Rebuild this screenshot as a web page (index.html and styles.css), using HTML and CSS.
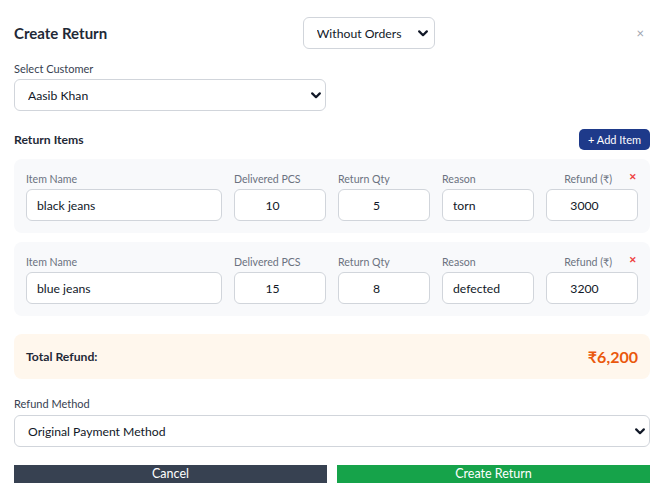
FILE: index.html
```html
<!DOCTYPE html>
<html>
<head>
<meta charset="utf-8">
<link rel="stylesheet" href="styles.css">
</head>
<body>
<div class="modal">
  <div class="header">
    <h1 class="title">Create Return</h1>
    <div class="select-wrap mode">
      <select class="select"><option>Without Orders</option></select>
      <svg class="chev" width="10" height="7" viewBox="0 0 10 7"><path d="M1.2 1.4 L5 5.2 L8.8 1.4" fill="none" stroke="#111827" stroke-width="2.2" stroke-linecap="round" stroke-linejoin="round"/></svg>
    </div>
    <span class="close">×</span>
  </div>

  <label class="label">Select Customer</label>
  <div class="select-wrap customer">
    <select class="select"><option>Aasib Khan</option></select>
    <svg class="chev" width="10" height="7" viewBox="0 0 10 7"><path d="M1.2 1.4 L5 5.2 L8.8 1.4" fill="none" stroke="#111827" stroke-width="2.2" stroke-linecap="round" stroke-linejoin="round"/></svg>
  </div>

  <div class="items-head">
    <span class="section">Return Items</span>
    <button class="add">+ Add Item</button>
  </div>

  <div class="card">
    <div class="field span2"><span class="flabel">Item Name</span><input class="input" value="black jeans"></div>
    <div class="field"><span class="flabel">Delivered PCS</span><input class="input num" value="10"></div>
    <div class="field"><span class="flabel">Return Qty</span><input class="input num" value="5"></div>
    <div class="field"><span class="flabel">Reason</span><input class="input" value="torn"></div>
    <div class="field"><span class="flabel end">Refund (₹)<span class="remove">✕</span></span><input class="input num" value="3000"></div>
  </div>

  <div class="card">
    <div class="field span2"><span class="flabel">Item Name</span><input class="input" value="blue jeans"></div>
    <div class="field"><span class="flabel">Delivered PCS</span><input class="input num" value="15"></div>
    <div class="field"><span class="flabel">Return Qty</span><input class="input num" value="8"></div>
    <div class="field"><span class="flabel">Reason</span><input class="input" value="defected"></div>
    <div class="field"><span class="flabel end">Refund (₹)<span class="remove">✕</span></span><input class="input num" value="3200"></div>
  </div>

  <div class="total">
    <span class="total-label">Total Refund:</span>
    <span class="total-value">₹6,200</span>
  </div>

  <label class="label last">Refund Method</label>
  <div class="select-wrap method">
    <select class="select"><option>Original Payment Method</option></select>
    <svg class="chev" width="10" height="7" viewBox="0 0 10 7"><path d="M1.2 1.4 L5 5.2 L8.8 1.4" fill="none" stroke="#111827" stroke-width="2.2" stroke-linecap="round" stroke-linejoin="round"/></svg>
  </div>

  <div class="actions">
    <button class="btn cancel">Cancel</button>
    <button class="btn create">Create Return</button>
  </div>
</div>
</body>
</html>
```
FILE: styles.css
```css
* { box-sizing: border-box; }
body {
  margin: 0;
  background: #fff;
  font-family: Lato, "Noto Sans", sans-serif;
  color: #1f2937;
}
.modal {
  padding: 17px 14px 0 14px;
  display: flex;
  flex-direction: column;
}
.header {
  display: flex;
  justify-content: space-between;
  align-items: center;
  height: 32px;
  margin-bottom: 12px;
}
.title {
  margin: 0;
  font-size: 15px;
  font-weight: 700;
  color: #1f2937;
}
.close {
  color: #9ca3af;
  font-size: 13px;
  margin-right: 6px;
}
.select-wrap {
  position: relative;
}
.select {
  appearance: none;
  -webkit-appearance: none;
  width: 100%;
  height: 32px;
  border: 1px solid #d1d5db;
  border-radius: 6px;
  background: #fff;
  font-family: inherit;
  font-size: 12.2px;
  color: #111827;
  padding: 0 13px;
  outline: none;
}
.chev {
  position: absolute;
  right: 5px;
  top: 13px;
  pointer-events: none;
}
.mode { width: 132px; margin-right: 6px; }
.mode .chev { right: 7px; }
.customer { width: 312px; margin-bottom: 18px; }
.method { width: 100%; margin-bottom: 18px; }
.label {
  font-size: 11px;
  line-height: 16px;
  color: #374151;
  margin-bottom: 2px;
}
.label.last { margin-bottom: 3px; }
.items-head {
  display: flex;
  justify-content: space-between;
  align-items: center;
  height: 21px;
  margin-bottom: 9px;
}
.section {
  font-size: 12.2px;
  font-weight: 700;
  color: #1f2937;
}
.add {
  height: 21px;
  width: 71px;
  border: none;
  border-radius: 5px;
  background: #1e3a8a;
  color: #fff;
  font-family: inherit;
  font-size: 11px;
  padding: 0;
}
.card {
  background: #f8f9fb;
  border-radius: 8px;
  padding: 12px;
  display: grid;
  grid-template-columns: repeat(6, 1fr);
  column-gap: 12px;
  margin-bottom: 9px;
}
.field {
  display: flex;
  flex-direction: column;
}
.span2 { grid-column: span 2; }
.flabel {
  font-size: 10.6px;
  line-height: 16px;
  color: #6b7280;
  margin-bottom: 2px;
}
.flabel.end {
  display: flex;
  justify-content: flex-end;
  align-items: flex-start;
}
.remove {
  color: #ef4444;
  font-size: 9px;
  line-height: 12px;
  margin-left: 17px;
  margin-right: 1px;
  font-weight: 700;
}
.input {
  height: 32px;
  border: 1px solid #d1d5db;
  border-radius: 6px;
  background: #fff;
  font-family: inherit;
  font-size: 12.2px;
  color: #111827;
  padding: 0 10px;
  outline: none;
  width: 100%;
}
.input.num {
  text-align: center;
  padding-right: 25px;
}
.total {
  margin-top: 9px;
  background: #fff7ed;
  border-radius: 8px;
  height: 45px;
  padding: 0 12px;
  display: flex;
  justify-content: space-between;
  align-items: center;
  margin-bottom: 17px;
}
.total-label {
  font-size: 12.2px;
  font-weight: 700;
  color: #1f2937;
}
.total-value {
  font-size: 16px;
  font-weight: 700;
  color: #ea580c;
}
.actions {
  display: flex;
  gap: 10px;
}
.btn {
  flex: 1;
  height: 18px;
  border: none;
  padding: 0;
  color: #fff;
  font-family: inherit;
  font-size: 12.5px;
  line-height: 18px;
}
.cancel { background: #374151; }
.create { background: #16a34a; }
```
